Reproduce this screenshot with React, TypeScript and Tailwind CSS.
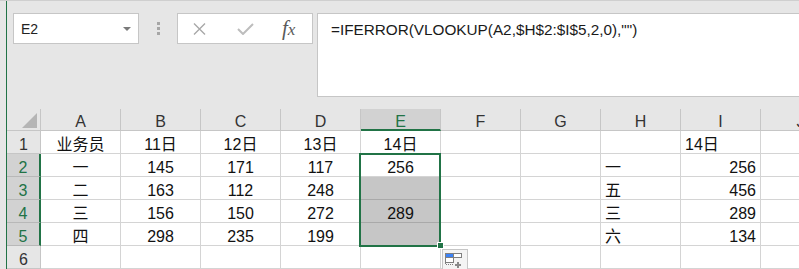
import React from "react";

type Cell = { v: string; align?: "c" | "l" | "r" };

const rows: Cell[][] = [
  [{ v: "业务员" }, { v: "11日" }, { v: "12日" }, { v: "13日" }, { v: "14日" }, { v: "" }, { v: "" }, { v: "" }, { v: "14日", align: "l" }, { v: "" }],
  [{ v: "一" }, { v: "145" }, { v: "171" }, { v: "117" }, { v: "256" }, { v: "" }, { v: "" }, { v: "一", align: "l" }, { v: "256", align: "r" }, { v: "" }],
  [{ v: "二" }, { v: "163" }, { v: "112" }, { v: "248" }, { v: "" }, { v: "" }, { v: "" }, { v: "五", align: "l" }, { v: "456", align: "r" }, { v: "" }],
  [{ v: "三" }, { v: "156" }, { v: "150" }, { v: "272" }, { v: "289" }, { v: "" }, { v: "" }, { v: "三", align: "l" }, { v: "289", align: "r" }, { v: "" }],
  [{ v: "四" }, { v: "298" }, { v: "235" }, { v: "199" }, { v: "" }, { v: "" }, { v: "" }, { v: "六", align: "l" }, { v: "134", align: "r" }, { v: "" }],
  [{ v: "" }, { v: "" }, { v: "" }, { v: "" }, { v: "" }, { v: "" }, { v: "" }, { v: "" }, { v: "" }, { v: "" }],
];

const letters = ["A", "B", "C", "D", "E", "F", "G", "H", "I", "J"];

function NameBox() {
  return (
    <div className="ml-[6px] flex h-[31px] w-[126px] shrink-0 items-center justify-between border border-[#c6c6c6] bg-white pl-[7px] pr-[7px]">
      <span className="pt-[1px] text-[14px] text-[#222]">E2</span>
      <svg width="8" height="4" viewBox="0 0 8 4">
        <path d="M0 0 L8 0 L4 4 Z" fill="#7a7a7a" />
      </svg>
    </div>
  );
}

function FormulaButtons() {
  return (
    <div className="flex h-[31px] w-[136px] shrink-0 items-center border border-[#c6c6c6] bg-white pl-[14px]">
      <svg width="16" height="12" viewBox="0 0 16 12" className="mr-[29px]">
        <path d="M2 0.5 L13 11.5 M13 0.5 L2 11.5" stroke="#a8a8a8" strokeWidth="1.4" fill="none" />
      </svg>
      <svg width="17" height="12" viewBox="0 0 17 12" className="mr-[28px]">
        <path d="M1 6 L6 11 L16 1" stroke="#bdbdbd" strokeWidth="2" fill="none" />
      </svg>
      <span className="font-['Liberation_Serif',serif] text-[21px] italic leading-none text-[#5a5a5a]">
        f<span className="text-[17px]">x</span>
      </span>
    </div>
  );
}

function PasteIcon() {
  return (
    <div className="absolute left-[435px] top-[140px] h-[22px] w-[26px] border border-[#c6c6c6] bg-[#f4f4f4]">
      <svg width="24" height="20" viewBox="0 0 24 20" className="absolute left-0 top-0">
        <rect x="2.5" y="3.5" width="8" height="4" fill="#3b82f6" stroke="#7f7f7f" />
        <rect x="10.5" y="3.5" width="8" height="4" fill="#fff" stroke="#7f7f7f" />
        <rect x="2.5" y="7.5" width="8" height="5" fill="#fff" stroke="#7f7f7f" />
        <path d="M2.5 13 V14.5 H10.5" stroke="#7f7f7f" strokeDasharray="1 1" fill="none" />
        <path d="M15 12 V18 M12 15 H18" stroke="#8a8a8a" strokeWidth="2" fill="none" />
      </svg>
    </div>
  );
}

export default function App() {
  return (
    <div className="h-[269px] w-[799px] overflow-hidden border-t border-[#cfcfcf] bg-[#e6e6e6] pl-[6px] font-['Liberation_Sans','Noto_Sans_CJK_SC',sans-serif]">
      <div className="flex h-full flex-col border-l border-[#217346]">
        {/* formula bar */}
        <div className="flex h-[108px] shrink-0 items-start pt-[12px]">
          <NameBox />
          <div className="flex h-[31px] w-[38px] shrink-0 flex-col items-center justify-center gap-[2px]">
            <div className="h-[3px] w-[3px] bg-[#a6a6a6]" />
            <div className="h-[3px] w-[3px] bg-[#a6a6a6]" />
            <div className="h-[3px] w-[3px] bg-[#a6a6a6]" />
          </div>
          <FormulaButtons />
          <div className="ml-[4px] h-[84px] flex-1 border-y border-l border-[#c6c6c6] bg-white pl-[13px] pt-[5px] text-[15.3px] text-[#1a1a1a]">
            =IFERROR(VLOOKUP(A2,$H$2:$I$5,2,0),"")
          </div>
        </div>

        {/* grid */}
        <div className="relative flex-1 bg-white">
          {/* column header */}
          <div className="flex h-[22px] bg-[#e6e6e6]">
            <div className="relative w-[34px] shrink-0 border-b border-r border-[#c6c6c6]">
              <svg width="16" height="15" viewBox="0 0 16 15" className="absolute left-[15px] top-[4px]">
                <path d="M15 0 L15 15 L0 15 Z" fill="#b5b5b5" />
              </svg>
            </div>
            {letters.map((l) => (
              <div
                key={l}
                className={
                  l === "E"
                    ? "w-[80px] shrink-0 border-b-2 border-r border-b-[#217346] border-r-[#c6c6c6] bg-[#d2d2d2] pt-[5px] text-center text-[16px] leading-[16px] text-[#217346]"
                    : "w-[80px] shrink-0 border-b border-r border-[#c6c6c6] pt-[5px] text-center text-[16px] leading-[16px] text-[#333]"
                }
              >
                {l}
              </div>
            ))}
          </div>

          {rows.map((row, ri) => {
            const sel = ri >= 1 && ri <= 4;
            return (
              <div key={ri} className="flex h-[23px]">
                <div
                  className={
                    sel
                      ? "w-[34px] shrink-0 border-b border-r-2 border-b-[#b8b8b8] border-r-[#217346] bg-[#d2d2d2] pt-[6px] text-center text-[16px] leading-[16px] text-[#217346]"
                      : "w-[34px] shrink-0 border-b border-r border-[#c6c6c6] bg-[#e6e6e6] pt-[6px] text-center text-[16px] leading-[16px] text-[#333]"
                  }
                >
                  {ri + 1}
                </div>
                {row.map((c, ci) => {
                  const gray = ci === 4 && ri >= 2 && ri <= 4;
                  const align =
                    c.align === "l" ? "text-left pl-[4px]" : c.align === "r" ? "text-right pr-[4px]" : "text-center";
                  return (
                    <div
                      key={ci}
                      className={
                        (gray
                          ? "border-b border-r border-b-[#a9a9a9] border-r-[#d4d4d4] bg-[#c6c6c6] "
                          : "border-b border-r border-[#d4d4d4] ") +
                        "w-[80px] shrink-0 whitespace-nowrap pt-[6px] text-[16px] leading-[16px] text-[#111] " +
                        align
                      }
                    >
                      {c.v}
                    </div>
                  );
                })}
              </div>
            );
          })}

          {/* selection E2:E5 */}
          <div className="pointer-events-none absolute left-[352px] top-[44px] h-[94px] w-[82px] border-2 border-[#217346]" />
          <div className="absolute left-[430px] top-[133px] h-[7px] w-[7px] border border-white bg-[#217346]" />
          <PasteIcon />
        </div>
      </div>
    </div>
  );
}
